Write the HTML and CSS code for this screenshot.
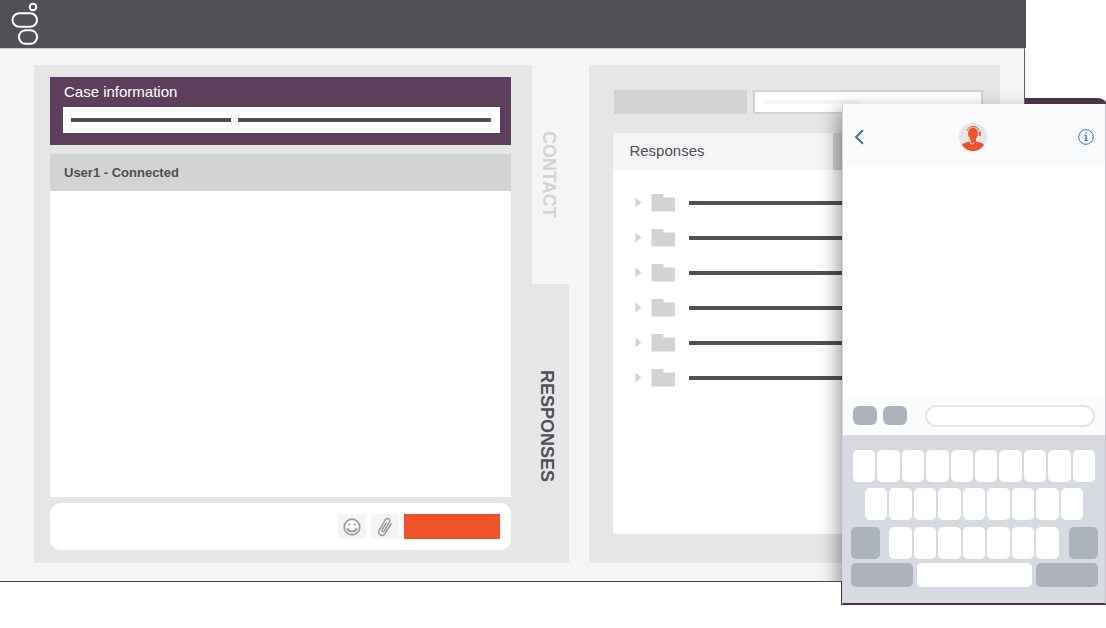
FILE: index.html
```
<!DOCTYPE html>
<html lang="en">
<head>
    <meta charset="UTF-8">
    <meta name="viewport" content="width=device-width, initial-scale=1.0">
    <title>Agent Desktop</title>
    <link rel="stylesheet" href="styles.css">
</head>
<body>
<div class="stage">
    <div class="desktop">
        <header class="topbar">
            <svg class="logo" width="28" height="48" viewBox="0 0 28 48" fill="none" stroke="#fff" stroke-width="2" role="img" aria-label="Logo">
                <circle cx="22" cy="7" r="3.3"/>
                <rect x="1.5" y="13.2" width="24.5" height="13.600" rx="6.800"/>
                <rect x="8" y="30.200" width="18" height="13.600" rx="6.500"/>
            </svg>
        </header>

        <main class="workspace">
            <section class="panel chat">
                <div class="case">
                    <h2>Case information</h2>
                    <div class="case-field">
                        <span class="bar short"></span>
                        <span class="bar"></span>
                    </div>
                </div>
                <div class="conversation">
                    <h3>User1 - Connected</h3>
                    <div class="messages"></div>
                </div>
                <form class="composer">
                    <input type="text" aria-label="Message">
                    <button type="button" class="tool" aria-label="Emoji">
                        <svg width="18" height="18" viewBox="0 0 18 18" fill="none" stroke="#999a9d" stroke-width="1.700" stroke-linecap="round">
                            <circle cx="9" cy="9" r="7.800"/>
                            <path d="M4.500 10.500c1 4.200 8 4.200 9 0"/>
                            <path d="M6.300 6.500v.1M11.700 6.500v.1" stroke-width="1.900"/>
                        </svg>
                    </button>
                    <button type="button" class="tool" aria-label="Attach file">
                        <svg width="18" height="20" viewBox="0 0 18 20" fill="none" stroke="#999a9d" stroke-width="1.500" stroke-linecap="round">
                            <path d="M15 7L9 16.600C6.400 20.400 1.200 17.600 3.200 13.400L9.200 3C11 .2 14.800 2.200 13.300 5.200L8.300 13.800C7.200 15.400 5.300 14.300 6.200 12.700L10.200 6"/>
                        </svg>
                    </button>
                    <button type="button" class="send" aria-label="Send"></button>
                </form>
            </section>

            <nav class="tabs">
                <button type="button" class="tab">CONTACT</button>
                <button type="button" class="tab active">RESPONSES</button>
            </nav>

            <section class="panel library">
                <div class="filters">
                    <button type="button" class="filter" aria-label="Filter"></button>
                    <div class="search">
                        <span class="hint"></span>
                        <input type="text" aria-label="Search responses">
                    </div>
                </div>
                <div class="responses">
                    <div class="responses-head">
                        <h2>Responses</h2>
                        <span class="head-tab"></span>
                    </div>
                    <ul>
                        <li><span class="arrow"></span><span class="folder"></span><span class="bar"></span></li>
                        <li><span class="arrow"></span><span class="folder"></span><span class="bar"></span></li>
                        <li><span class="arrow"></span><span class="folder"></span><span class="bar"></span></li>
                        <li><span class="arrow"></span><span class="folder"></span><span class="bar"></span></li>
                        <li><span class="arrow"></span><span class="folder"></span><span class="bar"></span></li>
                        <li><span class="arrow"></span><span class="folder"></span><span class="bar"></span></li>
                    </ul>
                </div>
            </section>
            <div class="phone-shadow"></div>
        </main>
    </div>

    <div class="phone">
        <header class="phone-head">
            <button type="button" aria-label="Back">
                <svg width="16" height="16" viewBox="0 0 16 16" fill="none" stroke="#3d72bd" stroke-width="2">
                    <path d="M11 1.300L4 8l7 6.700"/>
                </svg>
            </button>
            <svg width="28" height="28" viewBox="0 0 28 28" role="img" aria-label="Agent">
                <circle cx="14" cy="14" r="14" fill="#e6e6e6"/>
                <ellipse cx="14" cy="10.500" rx="5" ry="6" fill="#f1532b"/>
                <path fill="#f1532b" d="M11 14h6v4.500c3 .9 6.500 1 8 3.500C22.500 25.800 18.500 28 14 28S5.500 25.800 3 22c1.500-2.500 5-2.600 8-3.500z"/>
                <path fill="none" stroke="#f1532b" d="M8 7.500C9.500 2.200 18.500 2.200 20 7.500"/>
                <path fill="none" stroke="#f1532b" stroke-width="1.800" d="M20.800 8.500v4.500"/>
                <path fill="none" stroke="#e6e6e6" d="M11 17l1 4h2.500v-1.500"/>
            </svg>
            <button type="button" aria-label="Info">
                <svg width="16" height="16" viewBox="0 0 16 16" fill="none" stroke="#3d72bd">
                    <circle cx="8" cy="8" r="7.300"/>
                    <path d="M6.500 6.500h2M6.500 11.500h3"/>
                    <path d="M8 6v6M8 3.300v1.500" stroke-width="1.300"/>
                </svg>
            </button>
        </header>
        <div class="phone-messages"></div>
        <div class="phone-entry">
            <button type="button" aria-label="Camera"></button>
            <button type="button" aria-label="Apps"></button>
            <input type="text" aria-label="Text message">
        </div>
        <div class="keyboard">
            <div class="keys">
                <i></i><i></i><i></i><i></i><i></i><i></i><i></i><i></i><i></i><i></i>
            </div>
            <div class="keys second">
                <i></i><i></i><i></i><i></i><i></i><i></i><i></i><i></i><i></i>
            </div>
            <div class="keys third">
                <i class="side"></i>
                <i></i><i></i><i></i><i></i><i></i><i></i><i></i>
                <i class="side"></i>
            </div>
            <div class="keys fourth">
                <i class="wide"></i><i></i><i class="wide"></i>
            </div>
        </div>
    </div>
</div>
</body>
</html>
```
FILE: styles.css
```
* {
    box-sizing: border-box;
}
body {
    margin: 0;
    background: white;
    color: #505155;
    font-family: "Liberation Sans", Arial, sans-serif;
}
h2, h3 {
    margin: 0;
    font-size: 15px;
    font-weight: normal;
}
button, input {
    margin: 0;
    padding: 0;
    border: none;
    border-radius: 0;
    background: none;
    font: inherit;
    color: inherit;
}
button {
    cursor: pointer;
}
svg {
    display: block;
}
.stage {
    position: relative;
    min-height: 100vh;
}
.desktop {
    margin-right: 80px;
}
.topbar {
    height: 48px;
    padding-left: 11px;
    background: #505155;
}
.workspace {
    position: relative;
    overflow: hidden;
    display: grid;
    grid-template-columns: 499fr 57px 411fr;
    margin-right: 1px;
    padding: 16px 24px 18px 34px;
    background: #f4f5f7;
    border-top: 1px solid #c8c9cb;
    border-right: 1px solid #75506f;
    border-bottom: 1px solid #50405a;
}
.panel {
    background: #e6e6e6;
}
.bar {
    flex: 1;
    height: 4px;
    background: #505155;
}

/* chat side */
.chat {
    display: flex;
    flex-direction: column;
    padding: 12px 21px 13px 16px;
}
.case {
    padding: 6px 11px 12px 13px;
    margin-bottom: 9px;
    background: #5d3f5d;
    color: white;
}
.case h2 {
    padding-left: 1px;
    line-height: 18px;
    margin-bottom: 6px;
}
.case-field {
    display: flex;
    align-items: center;
    gap: 7px;
    height: 26px;
    padding: 0 9px 0 8px;
    background: white;
}
.case-field .short {
    flex: 0 0 38%;
}
.conversation h3 {
    padding-left: 14px;
    line-height: 37px;
    font-size: 13px;
    font-weight: bold;
    background: #d3d3d3;
}
.messages {
    height: 306px;
    background: white;
}
.composer {
    display: flex;
    align-items: center;
    gap: 5px;
    height: 47px;
    margin-top: 6px;
    padding: 0 11px;
    background: white;
    border-radius: 11px;
}
.composer input {
    flex: 1;
    min-width: 0;
    height: 32px;
}
.tool {
    display: flex;
    align-items: center;
    justify-content: center;
    width: 28px;
    height: 25px;
    background: #f4f5f7;
}
.send {
    width: 96px;
    height: 25px;
    background: #f1532b;
}

/* vertical tabs */
.tabs {
    display: grid;
    grid-template-rows: 219fr 279fr;
    margin-right: 20px;
}
.tab {
    writing-mode: vertical-rl;
    padding-right: 4px;
    font-size: 18px;
    font-weight: bold;
    line-height: 33px;
    color: #d3d3d3;
}
.tab.active {
    padding: 6px 7px 0 0;
    line-height: 30px;
    color: #505155;
    background: #e6e6e6;
}

/* response library */
.library {
    padding: 25px 17px 29px 24px;
    display: flex;
    flex-direction: column;
}
.filters {
    display: grid;
    grid-template-columns: minmax(0, 133fr) minmax(0, 230fr);
    gap: 6px;
    height: 24px;
    margin-bottom: 19px;
    padding-left: 1px;
}
.filter {
    background: #d3d3d3;
}
.search {
    display: flex;
    align-items: center;
    padding-left: 10px;
    background: white;
    border: 2px solid #d3d3d3;
}
.search .hint {
    flex: 0 0 94px;
    height: 4px;
    background: #f4f5f7;
}
.search input {
    flex: 1;
    min-width: 0;
}
.responses {
    flex: 1;
    background: white;
}
.responses-head {
    display: grid;
    grid-template-columns: 220fr 150fr;
    height: 37px;
    background: #f4f5f7;
}
.responses-head h2 {
    padding-left: 16px;
    line-height: 36px;
}
.head-tab {
    background: #d3d3d3;
}
.responses ul {
    margin: 0;
    padding: 15px 20px 0 22px;
    list-style: none;
}
.responses li {
    display: flex;
    align-items: center;
    height: 35px;
}
.arrow {
    width: 6px;
    height: 10px;
    margin-right: 10px;
    background: #d3d3d3;
    clip-path: polygon(0 0, 100% 50%, 0 100%);
}
.folder {
    width: 24px;
    height: 18px;
    margin-right: 14px;
    background: #d3d3d3;
    clip-path: polygon(0 0, 50% 0, 50% 22%, 100% 22%, 100% 100%, 0 100%);
}

/* phone lies over the desktop */
.phone-shadow {
    position: absolute;
    top: 57px;
    right: -80px;
    bottom: -22px;
    width: 262px;
    box-shadow: -4px 5px 18px rgba(0, 0, 0, 0.4);
}
.phone {
    position: absolute;
    top: 104px;
    right: 0;
    width: 264px;
    border-right: 1px solid #c5c3cb;
    border-bottom: 2px solid #4a3049;
    border-left: 1px solid #d5d5d9;
    background: white;
}
.phone::before {
    content: "";
    position: absolute;
    z-index: -1;
    top: -6px;
    right: -1px;
    width: 81px;
    height: 12px;
    background: #4a3049;
    border-top-right-radius: 10px 5px;
}
.phone::after {
    content: "";
    position: absolute;
    left: -2px;
    bottom: -2px;
    width: 1px;
    height: 23px;
    background: #4a3049;
}
.phone-head {
    display: flex;
    align-items: center;
    justify-content: space-between;
    height: 62px;
    padding: 3px 11px 0 9px;
    background: #f9fafc;
}
.phone-messages {
    height: 232px;
}
.phone-entry {
    display: flex;
    align-items: center;
    gap: 6px;
    height: 37px;
    padding: 0 10px 2px;
    background: #fafbfd;
}
.phone-entry button {
    width: 24px;
    height: 19px;
    border-radius: 6px;
    background: #adb3bd;
}
.phone-entry input {
    flex: 1;
    min-width: 0;
    height: 22px;
    margin-left: 12px;
    padding: 0 10px;
    background: white;
    border: 2px solid #e6e6ec;
    border-radius: 11px;
}
.keyboard {
    padding: 15px 7px 16px 8px;
    background: #d7dae1;
}
.keys {
    display: flex;
    gap: 2px;
    height: 32px;
    padding: 0 3px 0 2px;
    margin-bottom: 6px;
}
.keys i {
    flex: 1;
    background: white;
    border-radius: 5px;
}
.keys.second {
    padding: 0 15px 0 14px;
    margin-bottom: 7px;
}
.keys.third {
    padding: 0;
    margin-bottom: 4px;
}
.keys .side {
    flex: 0 0 29px;
    background: #adb3bd;
}
.keys .side:first-child {
    margin-right: 7px;
}
.keys .side:last-child {
    margin-left: 8px;
}
.keys.fourth {
    gap: 4px;
    height: 24px;
    padding: 0;
    margin-bottom: 0;
}
.keys .wide {
    flex: 0 0 62px;
    background: #adb3bd;
}
```
